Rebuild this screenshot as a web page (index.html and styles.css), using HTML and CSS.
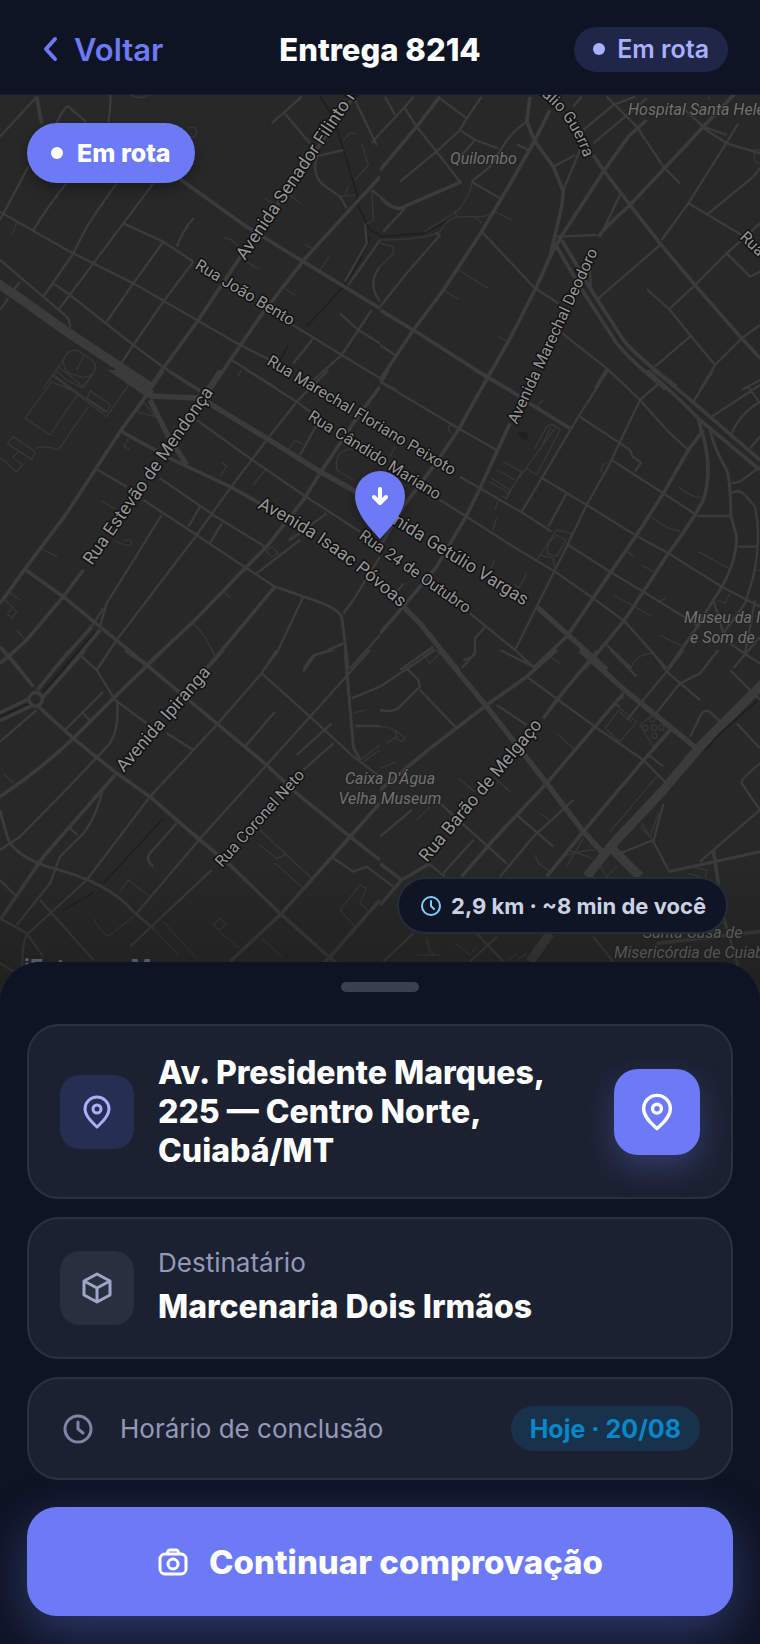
FILE: index.html
```html
<!DOCTYPE html>
<html lang="pt-BR">
<head>
<meta charset="utf-8">
<meta name="viewport" content="width=device-width, initial-scale=1">
<title>Entrega 8214</title>
<link rel="stylesheet" href="styles.css">
</head>
<body>
<header class="topbar">
  <a class="back" href="#">
    <svg class="back-icon" viewBox="0 0 16 26" aria-hidden="true"><path d="M13 3 4 13l9 10"/></svg>
    Voltar
  </a>
  <h1 class="title">Entrega 8214</h1>
  <span class="status"><span class="dot"></span>Em rota</span>
</header>

<main class="screen">
  <section class="map" aria-label="Mapa da entrega">
    <svg class="map-canvas" viewBox="0 95 760 907" preserveAspectRatio="xMidYMid slice">
      <svg class="tile" x="0" y="90" width="380" height="300" viewBox="0 0 1140 900">
        <path class="dark" d="M960 20L1000 80L1040 210L1070 310L1075 350L1110 420L1140 435M1110 440L1080 510L1030 590L920 710M865 765L835 820"/>
        <path class="lot" d="M670 445Q690 440 710 465M730 510L778 538M855 597L885 615M795 325L820 340M870 315L900 340M915 463L935 475M960 540L987 500M1070 130L1050 130L1030 150M1085 160L1105 225L1065 270M1020 320L1065 315M1045 290L1035 315M725 840L712 860M50 397L37 432M565 115Q590 105 590 130Q585 145 570 140M390 15Q420 30 445 15M190 810Q200 780 230 780L275 810Q295 830 280 850L250 893M190 810L130 895M190 810Q190 850 225 855Q260 870 280 850M250 800L230 840M175 830L250 890M160 853L215 895M1095 405L1120 390L1115 300"/>
        <path class="street" d="M110 20L0 140M170 100Q195 45 205 50L260 97M332 15Q330 70 325 97M85 230L0 390M200 280Q150 340 100 420M350 280Q270 390 250 430L220 490L130 620M460 280L370 400L280 520L175 660M490 455L400 580L320 695M580 515L490 635L400 765L360 825M0 510L200 680Q215 700 208 718M130 620L160 580L210 615L400 765L495 835L600 900M60 575L40 600M25 625L0 660M530 470Q550 420 580 385M815 100L905 20M850 65L930 160M1060 20L1130 165M1140 130L1115 160M945 200L1030 180M955 190Q930 250 970 285L1020 320L1040 355M1095 405L1100 460L1035 575M1140 450L1045 585M1115 300L1140 320M1140 530Q1100 580 1140 635M1020 670L1075 720L1140 760M1115 660L1075 720L1025 795L940 870M940 745L880 820M695 810L830 895M0 365L210 485L400 580L590 690L720 765L830 820M370 400L490 455L580 515M870 700L1140 865"/>
        <path class="road" d="M110 20L125 100M450 890L595 690L715 510L1075 0M630 900L780 680L920 500L1140 260M530 260L740 410L910 515L1140 655"/>
        <path class="avenue" d="M-10 578L60 625L200 725L450 890"/>
      </svg>
      <svg class="tile" x="380" y="90" width="380" height="300" viewBox="0 0 1140 900">
        <path class="dark" d="M0 440L130 430L200 395"/>
        <path class="lot" d="M235 540L325 595M190 600L235 628M355 740L385 755M275 280Q270 320 235 360L135 425M0 450Q130 450 180 425Q200 380 250 380L310 380L345 365L395 390M0 460L40 470L40 490L0 530M225 360L230 382M285 380L305 400M1140 180L1120 180L1125 215L1140 222M985 20L990 30"/>
        <path class="street" d="M0 130L80 45L100 20M15 20L45 75M75 55L110 110L170 185L240 275M180 25L260 85L305 20M260 85L240 120L175 180L60 275M240 120L285 150L355 175M285 150L240 200M440 95Q390 130 365 175L330 230L275 275M410 163L445 180M275 275L360 325M75 355L10 425M165 430L180 435L80 550L0 650M305 425L465 595L535 640M0 765L45 795M0 875L50 900M540 725L680 835L750 900M680 835L645 895M605 20L580 50M680 20L770 110L850 230L900 280M765 20L700 45L610 120M800 25L640 160M910 55L970 110L1040 135M970 115L1040 160L1140 190M1075 100L1035 165L925 340L845 450M925 340L1085 435M1140 235L1120 260L980 375M1140 400L1040 490L945 585L870 655M1040 490L1110 560L1140 545M840 465L800 500L655 625M800 597L870 660L930 735L1005 825L960 900M930 740L825 830M1140 705L1085 745L1005 825M1140 870L1085 900M600 180L550 300M585 195L520 230M530 440L650 435M720 315L660 440M590 530L630 540L632 590"/>
        <path class="road" d="M180 20L110 110L0 240M0 320Q30 355 60 355L245 275M510 60L465 150L400 265L305 425L190 600L100 720L0 870M450 20L440 95L465 155L520 230L550 305L545 350L510 500L465 600L385 755L305 895M800 90L745 140L670 245L540 445L500 520M1075 0L970 110L750 345L680 410L655 440M640 195L670 240L750 345L840 460L945 585L1085 745L1140 805M0 660L100 720L320 860L390 900M530 470L600 590L710 760Q760 820 860 900M545 450L640 610L730 750Q770 800 890 890"/>
      </svg>
      <svg class="tile" x="0" y="370" width="380" height="300" viewBox="0 0 1140 900">
        <path class="dark" d="M285 785L190 895"/>
        <path class="lot" d="M155 35L75 145L150 195L235 70ZM40 200L105 245L95 268L22 220ZM0 262L50 305L68 285L38 262L55 245M105 235Q140 225 175 240L265 110M165 0L200 30L245 52L280 10M155 15L320 140L385 45M165 20L315 127M270 62L332 105L320 125L262 85ZM410 125L465 140L430 95ZM385 205L372 230L388 238M665 275L680 290L660 320M760 345L795 300M305 393L350 420M340 510Q385 535 395 520Q395 505 372 512M120 535L172 560M25 665L60 690M15 690L50 725L35 745L22 730L35 715M50 780L75 808M865 240L885 210L910 225M1060 235Q1000 240 1010 300L1060 330M800 545L815 530L835 550L815 560ZM670 665L690 682M725 0L712 20M862 515L885 485M580 760Q620 800 645 860"/>
        <path class="street" d="M500 0L600 65M590 150L750 265L910 375L1080 485M740 0L890 95L930 125M985 0L890 95L800 210L690 355L590 495L350 810L290 900M285 295L380 350M430 390L590 495L740 595L825 650M480 325L640 435L795 530M600 410L565 470M665 460L630 520M485 435L320 700L300 770M910 680L830 850L790 900M980 430L870 510M770 610L900 510M900 255L950 165M1140 560L1060 690L1030 730M1030 820L975 845L940 855L910 895M1140 795L1050 895M240 855L290 900M310 715L275 770"/>
        <path class="road" d="M365 185L510 265L690 350L780 400M490 0L440 75L360 185L200 430L80 590L0 700M660 0L600 90M250 600L190 680L80 810L25 860L0 880M70 595L190 680L300 770L440 885L470 910M1140 50L1080 130L960 310L910 390L800 530L740 590L580 755L430 895M825 650L620 895M0 830L60 900M275 770L160 900M300 780L200 900"/>
        <path class="collector" d="M825 650L910 680Q1010 710 1025 740L1045 900"/>
        <path class="trunk" d="M450 78L600 84M620 95L800 205L960 305L1140 405M450 90L500 190L560 285"/>
        <path class="avenue" d="M325 -15L455 75"/>
      </svg>
      <svg class="tile" x="380" y="370" width="380" height="300" viewBox="0 0 1140 900">
        <path class="pond" d="M412 190L425 184L446 194L440 210L422 204Z"/>
        <path class="lot" d="M370 275L425 305L380 385L365 378M350 300L405 330M335 325L390 360M328 335L380 365M465 235L500 170Q515 155 540 180L470 315L440 295M480 240L512 172M380 375L525 175M470 570L530 480L575 490L560 530M505 520L530 495L558 510L530 560L500 550ZM480 555L520 565L525 600M355 390L345 420M350 445L338 480M345 570L330 600M440 610L415 655L400 640M895 350Q930 380 965 383M815 440Q860 480 900 483M955 545L1050 597M700 675L815 738M840 795L905 828M740 545L765 560M785 585L820 605M840 695L858 683M665 310Q660 280 680 280M130 855L160 835L180 850L150 880ZM510 860L540 880M755 890Q770 850 820 850M470 110L488 90M215 165Q195 170 215 190M45 230L30 260M1010 690L1035 700L1050 670M1130 600L1140 602"/>
        <path class="street" d="M0 35L235 175L350 240M685 0L595 140L485 325L425 425M600 140L720 220L750 240L758 260L783 278L765 305M685 0L780 90L865 185L925 240M835 42L780 90L720 215L690 280L620 405L560 530L520 610L405 840M1000 0L940 95M1140 45L995 140M1105 50L1140 100M1140 95Q1080 130 1055 190M1110 235L1140 200M1140 290L1080 335L1055 340M1055 370Q1075 355 1095 375L1125 410Q1145 500 1120 620L1095 700L1030 790M950 438L1055 438M1075 530L1130 530M695 270L850 370L950 435M240 320L300 355L430 430L515 485M180 390L260 440L400 530L525 605L640 685L735 755L860 895M480 320L620 405L765 495L865 550L1025 650L1140 710M565 525L690 605L790 665L960 770M560 370L505 470M270 730L405 840L465 895M315 770L285 805L285 850L245 895M160 830L60 900M680 825L755 895M1050 820L1100 855L1140 880M1000 690L1030 790M1060 895L1140 800M1000 0L990 10M1095 850L1125 690M70 640Q60 660 45 665"/>
        <path class="road" d="M25 0L0 40M335 0L235 180L160 290L70 410L0 530M390 160L300 355L255 445L170 590L70 710L0 790M285 0L320 20L420 80M440 95L570 175M970 180L925 240L850 370L770 495L690 610L560 800L460 895M965 180Q1000 300 970 390Q940 450 865 550L790 665L730 755L610 900M955 145L965 190M815 -5L920 80L1140 270M795 -5L900 90L960 150L1140 300"/>
        <path class="collector" d="M990 180Q1000 230 1040 300Q1050 320 1053 440L1070 500Q1070 590 1000 690L945 780L865 895"/>
        <path class="trunk" d="M70 710L120 760L240 910M470 710L565 795L680 900"/>
      </svg>
      <svg class="tile" x="0" y="650" width="380" height="360" viewBox="0 0 1140 1080">
        <path class="dark" d="M240 0L130 125M85 162L0 200M490 505L310 700M280 728L190 780"/>
        <path class="lot" d="M360 725L385 690L450 740M280 805Q310 860 330 855L400 800M490 815L590 925M460 835L535 915M780 540L935 685M778 585L830 625L855 615L850 605M825 640L905 710M1065 830L1020 780L1080 705L1100 715L1080 760L1110 785M640 825L660 805L678 822L658 840ZM658 845L720 895M785 865L845 920M10 370L40 400M1060 190L1100 178M1080 330L1140 285M1090 335L1140 300M635 0L648 20M1040 50L1055 50L1055 65"/>
        <path class="street" d="M240 15L290 60L345 150L440 220M500 250L580 300L650 225M330 0L290 60M350 150Q360 230 330 280Q200 420 60 560L0 600M310 125L195 240M250 190L268 210M830 0L785 70L650 225L450 440L260 690L80 855Q65 880 65 1000M785 70L930 200L1060 320L1140 380M1110 0L930 200L800 345L605 560L410 790M735 290L825 185M635 660L390 890M0 690L45 735M0 805L80 850L130 920M120 750L280 930M210 535L232 555M1000 280L910 360M890 315L995 220M530 520L450 610Q435 630 460 650M310 410Q290 500 250 550L180 620L150 700L50 825M910 65L945 15L1000 0M1055 145L1140 110M1065 228L1140 228M0 940L60 975M0 40L50 0M110 180L0 275M1000 625L1060 665L1100 650L1140 680"/>
        <path class="road" d="M20 10L100 110M210 0L112 120M255 0L130 140M90 145L0 188M100 165L0 212M115 170L220 265L350 370L450 440L530 510L600 570L690 645L840 790L1020 950M375 0L440 45L650 220L800 345L890 430L1050 560L1140 630M490 0L340 145L220 265Q120 360 0 440M345 375L130 620L0 810M670 0L630 45M1140 460L1050 560L845 790L690 935M1140 750L990 920L970 940"/>
        <path class="collector" d="M0 480Q20 560 30 580Q70 630 160 655Q330 700 400 785L460 835M1035 0L1060 290L1080 330"/>
        <circle class="road" cx="107" cy="148" r="20"/>
      </svg>
      <svg class="tile" x="380" y="650" width="380" height="360" viewBox="0 0 1140 1080">
        <path class="avenue" d="M1150 100L960 290L850 420L700 580L620 680M510 850L450 935M700 600L780 680"/>
        <path class="dark" d="M1140 145L1020 250L975 300"/>
        <path class="lot" d="M720 175L770 215L720 275L675 235ZM718 185L755 215M780 225L825 190L875 230L820 290ZM690 545L830 380M925 650L980 660L975 685M925 670L960 680M110 915L185 915M140 860L150 915M135 870L162 915M225 880L270 915L290 890M385 930L405 915L420 925L440 910M530 250L580 295M235 385L285 425M340 380L390 425M0 230Q50 230 50 260L20 280M45 240L75 265L65 275L45 262M0 355L50 335M110 510L150 470M480 490L510 510M550 620Q600 600 645 600M565 600L640 625M560 650L610 565M465 615L475 640L510 665M780 530L820 570M785 520L810 560L835 490M655 640L680 680L710 650"/>
        <path class="street" d="M75 50L115 90L120 110L60 170Q40 190 0 180M120 120L230 235M165 0L0 110M440 80L535 150L645 230L790 330L860 400M360 0L460 50M350 165L440 225M250 30Q290 20 285 0M580 450L460 560L360 680M410 495L520 590M0 560L95 480M180 460L380 640M280 570L190 670M910 0L860 65L740 210M1015 0L960 70L900 100L820 200M820 10L860 65L960 150M690 0L770 80M1050 60L1140 150M930 260L965 190Q980 175 995 190L1020 215M1070 220L1140 295M1140 340Q1080 390 1085 400L1140 480L1000 600L960 635M865 660L820 575L850 460M820 570L720 610M290 850L370 935M350 860L270 935M640 860L700 935M100 850L10 935M800 310L850 350M0 680L40 710M145 640L195 680M730 140L700 160L720 170"/>
        <path class="road" d="M530 0L440 80L320 165L150 295L0 420M655 0L530 150L490 205M730 130L500 400L340 570L245 680M880 230L800 320L610 545L500 680M150 640L65 690L0 765M0 640L65 690M830 880L1140 845M1000 600L1015 700"/>
        <path class="collector" d="M865 665L1140 605M1000 600L1030 800L1075 950"/>
        <path class="trunk" d="M180 0L320 170L430 310L500 400L610 545L670 610M600 0L740 125L950 295"/>
        <g class="lot"><circle cx="817" cy="208" r="8"/><circle cx="796" cy="234" r="8"/><circle cx="822" cy="233" r="8"/><circle cx="844" cy="233" r="8"/><circle cx="823" cy="257" r="8"/></g>
      </svg>

      <path id="guerra" class="guide" d="M492 70Q562 92 584 158"/>
      <path id="isaac" class="guide" d="M257 508Q330 542 420 626"/>
      <g class="street-name wide">
        <text transform="translate(245 261) rotate(-56)">Avenida Senador Filinto Müller</text>
        <text transform="translate(92 566) rotate(-55)">Rua Estevão de Mendonça</text>
        <text transform="translate(124 773) rotate(-49)">Avenida Ipiranga</text>
        <text transform="translate(427 863) rotate(-50)">Rua Barão de Melgaço</text>
        <text transform="translate(524 606) rotate(32)" text-anchor="end">Avenida Getúlio Vargas</text>
        <text><textPath href="#isaac">Avenida Isaac Póvoas</textPath></text>
      </g>
      <g class="street-name">
        <text transform="translate(517 425) rotate(-65)">Avenida Marechal Deodoro</text>
        <text transform="translate(194 268) rotate(31)">Rua João Bento</text>
        <text transform="translate(266 364) rotate(31)">Rua Marechal Floriano Peixoto</text>
        <text transform="translate(307 419) rotate(32)">Rua Cândido Mariano</text>
        <text transform="translate(358 538) rotate(35)">Rua 24 de Outubro</text>
        <text transform="translate(222 868) rotate(-48)">Rua Coronel Neto</text>
        <text transform="translate(739 238) rotate(44)">Rua</text>
        <text text-anchor="end"><textPath href="#guerra" startOffset="100%">Natálio Guerra</textPath></text>
      </g>
      <g class="place">
        <text x="628" y="115">Hospital Santa Helena</text>
        <text x="450" y="164">Quilombo</text>
        <text x="684" y="623">Museu da Imagem</text>
        <text x="690" y="643">e Som de Cuiabá</text>
        <text x="390" y="784" text-anchor="middle">Caixa D'Água</text>
        <text x="390" y="804" text-anchor="middle">Velha Museum</text>
        <text x="643" y="938">Santa Casa de</text>
        <text x="614" y="958">Misericórdia de Cuiabá</text>
      </g>
      <g class="pin">
        <path class="pin-body" d="M380 539C373 531 355 514 355 496A25 25 0 0 1 405 496C405 514 387 531 380 539Z"/>
        <path class="pin-arrow" d="M380 489V502M374 497L380 503L386 497"/>
      </g>
    </svg>
    <span class="map-status"><span class="dot"></span>Em rota</span>
    <span class="distance">
      <svg class="distance-icon" viewBox="0 0 24 24" aria-hidden="true"><circle cx="12" cy="12" r="9"/><path d="M12 7v5l3 3"/></svg>
      2,9 km · ~8 min de você
    </span>
    <span class="credit">iEntregas Maps</span>
  </section>

  <section class="sheet">
    <div class="handle"></div>
    <div class="cards">
      <article class="card">
        <span class="tile-icon accent">
          <svg class="icon" viewBox="0 0 32 36" aria-hidden="true"><path d="M16 33C12 29 4 23 4 15a12 12 0 0 1 24 0c0 8-8 14-12 18z"/><circle cx="16" cy="15" r="4"/></svg>
        </span>
        <p class="strong address">Av. Presidente Marques, 225 — Centro Norte, Cuiabá/MT</p>
        <button class="locate" type="button" aria-label="Abrir no mapa">
          <svg class="icon big" viewBox="0 0 32 36" aria-hidden="true"><path d="M16 33C12 29 4 23 4 15a12 12 0 0 1 24 0c0 8-8 14-12 18z"/><circle cx="16" cy="15" r="4"/></svg>
        </button>
      </article>
      <article class="card">
        <span class="tile-icon">
          <svg class="icon" viewBox="0 0 32 36" aria-hidden="true"><path d="M16 4 29 11v14l-13 7-13-7V11zM3 11l13 7 13-7M16 18v14"/></svg>
        </span>
        <div class="recipient">
          <p class="label">Destinatário</p>
          <p class="strong">Marcenaria Dois Irmãos</p>
        </div>
      </article>
      <article class="card">
        <svg class="clock" viewBox="0 0 36 36" aria-hidden="true"><circle cx="18" cy="18" r="13"/><path d="M18 11v7l5 4"/></svg>
        <p class="label grow">Horário de conclusão</p>
        <time class="tag" datetime="08-20">Hoje · 20/08</time>
      </article>
    </div>
    <button class="submit" type="button">
      <svg class="camera" viewBox="0 0 32 32" aria-hidden="true"><rect x="3" y="8" width="26" height="20" rx="5"/><path d="M10 8l1-3a2 2 0 0 1 2-1h6a2 2 0 0 1 2 1l1 3"/><circle cx="16" cy="18" r="5"/></svg>
      Continuar comprovação
    </button>
  </section>
</main>
</body>
</html>
```

FILE: styles.css
```css
* { box-sizing: border-box; }

body {
  margin: 0;
  min-height: 100vh;
  display: flex;
  flex-direction: column;
  background: #0e1423;
  color: #fff;
  font-family: Inter, "Liberation Sans", sans-serif;
}

h1, p { margin: 0; }
svg { display: block; flex: none; }
button { border: 0; font: inherit; color: inherit; cursor: pointer; }

.topbar {
  display: grid;
  grid-template-columns: 1fr auto 1fr;
  align-items: center;
  padding: 4px 32px 0;
  height: 95px;
  border-bottom: 1px solid #171e33;
}
.back {
  display: flex;
  align-items: center;
  gap: 16px;
  padding-left: 10px;
  color: #6c7af6;
  font-size: 31px;
  font-weight: 600;
  text-decoration: none;
}
.back-icon { width: 16px; height: 26px; fill: none; stroke: currentColor; stroke-width: 4; stroke-linecap: round; stroke-linejoin: round; }
.title { font-size: 31px; font-weight: 800; }
.dot { width: 12px; height: 12px; border-radius: 50%; background: currentColor; }
.status {
  justify-self: end;
  display: flex;
  align-items: center;
  gap: 12px;
  height: 45px;
  padding: 0 19px;
  border-radius: 23px;
  background: #1f2648;
  color: #a9b0fc;
  font-size: 25px;
  font-weight: 600;
}

.screen { flex: 1; display: flex; flex-direction: column; }
.map { position: relative; flex: 1; min-height: 400px; overflow: hidden; background: #282828; }
.map::after {
  content: "";
  position: absolute;
  inset: auto 0 0;
  height: 140px;
  background: linear-gradient(rgba(24, 24, 24, 0), rgba(24, 24, 24, 0.5));
}
.map-canvas { position: absolute; inset: 0; width: 100%; height: 100%; }
.tile path, .tile circle { fill: none; stroke: #3b3b3b; stroke-linejoin: round; }
.tile .lot, .tile .lot circle { stroke: #373737; stroke-width: 4; }
.tile .street { stroke-width: 7; }
.tile .collector { stroke-width: 9; }
.tile .road { stroke-width: 11; }
.tile .trunk { stroke-width: 16; }
.tile .avenue { stroke-width: 28; }
.tile .dark { stroke: #1f1f1f; stroke-width: 5; }
.tile .pond { fill: #202020; stroke: none; }
.guide { fill: none; }
.street-name, .place { font-family: Roboto, "Liberation Sans", sans-serif; paint-order: stroke; stroke-linejoin: round; }
.street-name { font-size: 16px; fill: #969696; stroke: #111; stroke-width: 3; }
.wide { font-size: 18px; }
.place { font-size: 16px; font-style: italic; fill: #727272; stroke: #232323; stroke-width: 2; }
.pin { filter: drop-shadow(0 3px 5px rgba(0, 0, 0, 0.3)); }
.pin-body { fill: #6c7af6; }
.pin-arrow { fill: none; stroke: #fff; stroke-width: 4; stroke-linecap: round; stroke-linejoin: round; }

.map-status {
  position: absolute;
  top: 28px;
  left: 27px;
  display: flex;
  align-items: center;
  gap: 14px;
  height: 60px;
  padding: 0 24px;
  border-radius: 30px;
  background: #6c7af6;
  font-size: 25px;
  font-weight: 800;
  box-shadow: 0 6px 14px rgba(0, 0, 0, 0.3);
}
.distance {
  position: absolute;
  z-index: 1;
  right: 32px;
  bottom: 68px;
  display: flex;
  align-items: center;
  gap: 8px;
  height: 57px;
  padding: 0 20px;
  border: 2px solid #252c3c;
  border-radius: 29px;
  background: #0f1525;
  color: #ccd2e6;
  font-size: 22px;
  font-weight: 700;
}
.distance-icon { width: 24px; height: 24px; fill: none; stroke: #7dd0fb; stroke-width: 2; stroke-linecap: round; }
.credit { position: absolute; z-index: 1; left: 24px; bottom: 22px; color: #565a6e; font-size: 22px; font-weight: 700; line-height: 26px; }

.sheet {
  position: relative;
  z-index: 2;
  margin-top: -40px;
  padding: 20px 27px 28px;
  border-radius: 40px 40px 0 0;
  background: #0e1423;
  overflow: hidden;
}
.handle { width: 78px; height: 10px; margin: 0 auto 32px; border-radius: 5px; background: #3a404f; }
.cards { display: flex; flex-direction: column; gap: 18px; margin-bottom: 27px; }
.card {
  display: flex;
  align-items: center;
  gap: 24px;
  padding: 27px 31px;
  border: 2px solid #2b3140;
  border-radius: 32px;
  background: #1b2130;
}
.tile-icon {
  display: grid;
  place-items: center;
  flex: none;
  width: 74px;
  height: 74px;
  border-radius: 20px;
  background: #292f3f;
  color: #9ea7c7;
}
.accent { background: #262e52; color: #a9b0fc; }
.icon { width: 32px; height: 36px; fill: none; stroke: currentColor; stroke-width: 3; stroke-linejoin: round; }
.big { width: 36px; height: 40px; }
.strong { font-size: 32px; font-weight: 800; line-height: 39px; }
.address { max-width: 420px; }
.grow { flex: 1; }
.recipient { display: flex; flex-direction: column; gap: 7px; padding: 0 0 4px; }
.label { color: #9499bb; font-size: 26px; line-height: 34px; }
.locate {
  display: grid;
  place-items: center;
  flex: none;
  width: 86px;
  height: 86px;
  margin-left: auto;
  padding: 0;
  border-radius: 24px;
  background: #6c7af6;
  box-shadow: 0 12px 32px rgba(108, 122, 246, 0.3);
}
.clock { width: 36px; height: 36px; fill: none; stroke: #8085a8; stroke-width: 3; stroke-linecap: round; }
.tag {
  display: flex;
  align-items: center;
  height: 45px;
  padding: 0 19px;
  border-radius: 23px;
  background: #17324a;
  color: #0787cc;
  font-size: 25px;
  font-weight: 700;
}
.submit {
  display: flex;
  align-items: center;
  justify-content: center;
  gap: 20px;
  width: 100%;
  height: 109px;
  border-radius: 30px;
  background: #6c7af6;
  font-size: 33px;
  font-weight: 800;
  box-shadow: 0 16px 48px rgba(108, 122, 246, 0.35);
}
.camera { width: 32px; height: 32px; fill: none; stroke: currentColor; stroke-width: 3; stroke-linejoin: round; }
```
